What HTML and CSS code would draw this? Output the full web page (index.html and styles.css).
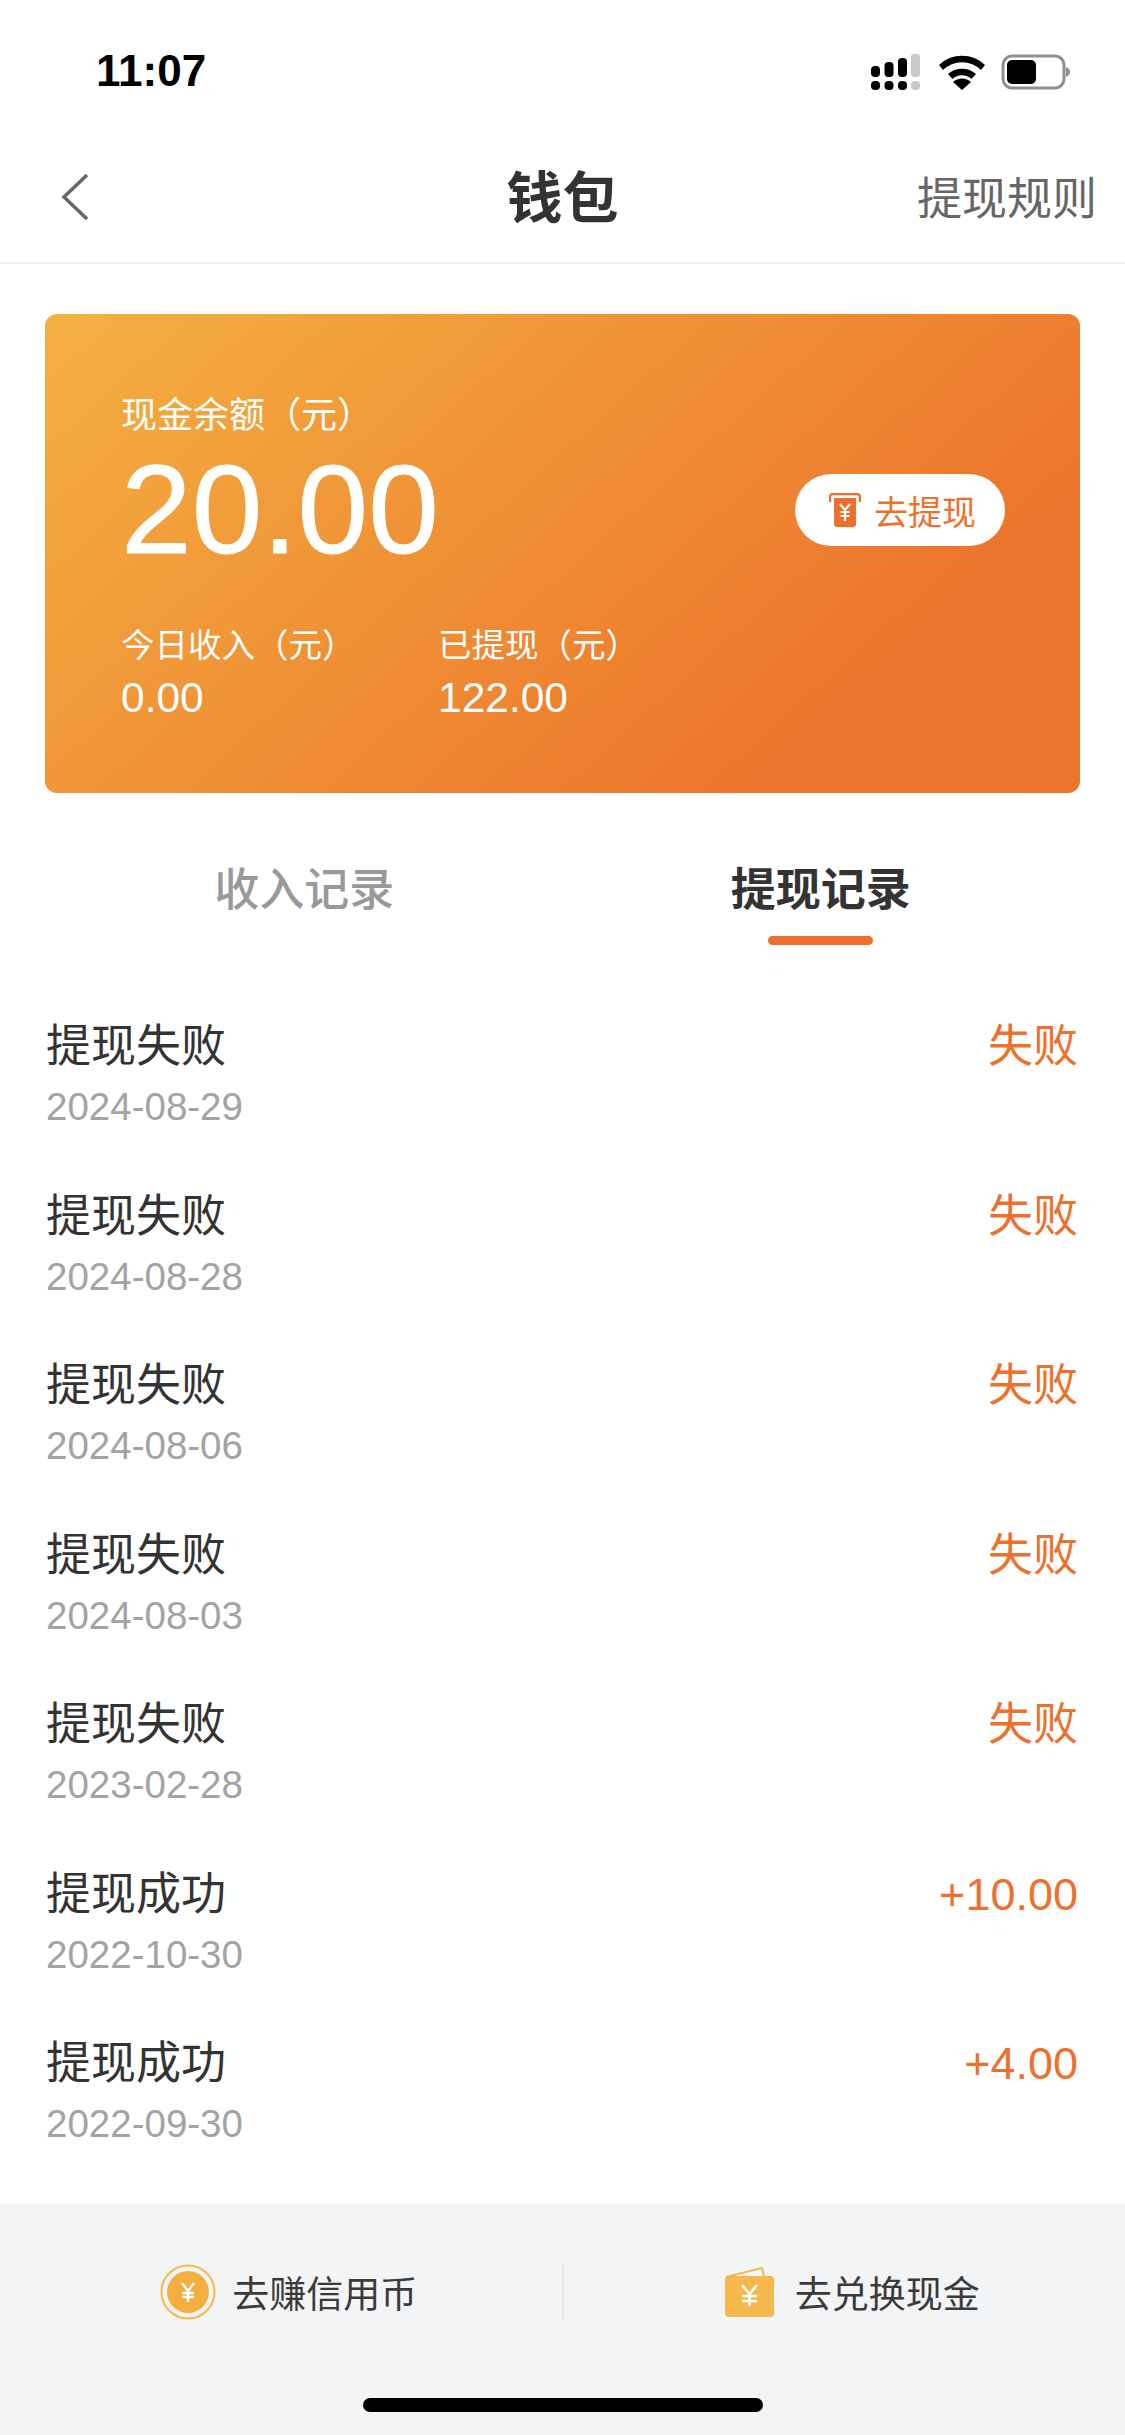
FILE: index.html
```html
<!DOCTYPE html>
<html lang="zh">
<head>
<meta charset="utf-8">
<title>钱包</title>
<link rel="stylesheet" href="styles.css">
</head>
<body>
<div class="page">
  <div class="status">
    <span class="time">11:07</span>
    <div class="status-icons">
      <svg width="52" height="36" viewBox="0 0 52 36">
        <g fill="#000">
          <rect x="0" y="12" width="9" height="11" rx="4"/><rect x="13.5" y="8" width="9" height="15" rx="4"/><rect x="27" y="4" width="9" height="19" rx="4"/>
          <rect x="0" y="27" width="9" height="9" rx="4"/><rect x="13.5" y="27" width="9" height="9" rx="4"/><rect x="27" y="27" width="9" height="9" rx="4"/>
        </g>
        <g fill="#c9c9c9"><rect x="40" y="0" width="9" height="23" rx="3"/><rect x="40" y="27" width="9" height="9" rx="4"/></g>
      </svg>
      <svg width="48" height="36" viewBox="0 0 48 36">
        <path d="M1 11a33 33 0 0 1 46 0l-4 5a27 27 0 0 0-38 0zM10 20a21 21 0 0 1 28 0l-4.500 5a14 14 0 0 0-19 0zM24 36l-9-8a13 13 0 0 1 18 0z" fill="#000"/>
      </svg>
      <svg width="69" height="36" viewBox="0 0 69 36">
        <rect x="2" y="2" width="61" height="32" rx="9" fill="none" stroke="#8f8f8f" stroke-width="3"/>
        <rect x="6" y="6" width="29" height="24" rx="5" fill="#000"/>
        <path d="M65 13c3 1 4 3 4 5s-1 4-4 5z" fill="#8f8f8f"/>
      </svg>
    </div>
  </div>
  <header class="nav">
    <svg class="back" width="30" height="48" viewBox="0 0 30 48"><path d="M27 2 4 24l23 22" fill="none" stroke="#666" stroke-width="3.500"/></svg>
    <h1 class="nav-title">钱包</h1>
    <span class="nav-rule">提现规则</span>
  </header>
  <section class="card">
    <div class="card-top">
      <div>
        <div class="label">现金余额（元）</div>
        <div class="balance">20.00</div>
      </div>
      <button class="withdraw">
        <svg width="32" height="34" viewBox="0 0 32 34">
          <path d="M1 9V4a3 3 0 0 1 3-3h24a3 3 0 0 1 3 3v5" fill="none" stroke="#ee702d" stroke-width="2.500"/>
          <path d="M5 5h22v26a3 3 0 0 1-3 3H8a3 3 0 0 1-3-3z" fill="#ee702d"/>
          <path d="M11 11l5 6 5-6M16 17v11M11.500 19h9M11.500 23h9" fill="none" stroke="#fff" stroke-width="2"/>
        </svg>
        <span>去提现</span>
      </button>
    </div>
    <div class="card-stats">
      <div class="stat"><div class="label-sm">今日收入（元）</div><div class="stat-val">0.00</div></div>
      <div class="stat"><div class="label-sm">已提现（元）</div><div class="stat-val">122.00</div></div>
    </div>
  </section>
  <nav class="tabs">
    <div class="tab">收入记录</div>
    <div class="tab tab-active">提现记录</div>
  </nav>
  <ul class="list">
    <li class="row"><div><div class="row-title">提现失败</div><div class="row-date">2024-08-29</div></div><div class="row-val">失败</div></li>
    <li class="row"><div><div class="row-title">提现失败</div><div class="row-date">2024-08-28</div></div><div class="row-val">失败</div></li>
    <li class="row"><div><div class="row-title">提现失败</div><div class="row-date">2024-08-06</div></div><div class="row-val">失败</div></li>
    <li class="row"><div><div class="row-title">提现失败</div><div class="row-date">2024-08-03</div></div><div class="row-val">失败</div></li>
    <li class="row"><div><div class="row-title">提现失败</div><div class="row-date">2023-02-28</div></div><div class="row-val">失败</div></li>
    <li class="row"><div><div class="row-title">提现成功</div><div class="row-date">2022-10-30</div></div><div class="row-val">+10.00</div></li>
    <li class="row"><div><div class="row-title">提现成功</div><div class="row-date">2022-09-30</div></div><div class="row-val">+4.00</div></li>
  </ul>
  <footer class="footer">
    <div class="actions">
      <div class="action">
        <svg width="56" height="56" viewBox="0 0 56 56">
          <circle cx="28" cy="28" r="26.500" fill="none" stroke="#f5b84c" stroke-width="2"/>
          <circle cx="28" cy="28" r="21" fill="#f3ae3f"/>
          <path d="M22 19l6 8 6-8M28 27v11M22 29h12M22 33h12" fill="none" stroke="#fff" stroke-width="2.500"/>
        </svg>
        <span>去赚信用币</span>
      </div>
      <div class="sep"></div>
      <div class="action action-wallet">
        <svg width="50" height="50" viewBox="0 0 50 50">
          <path d="M1 10 37 1l2 8" fill="none" stroke="#f5b84c" stroke-width="2"/>
          <rect x="0" y="9" width="49" height="41" rx="4" fill="#f5b84c"/>
          <path d="M17 18l7.500 9 7.500-9M24.500 27v12M17 29h15M17 34h15" fill="none" stroke="#fff" stroke-width="2.500"/>
        </svg>
        <span>去兑换现金</span>
      </div>
    </div>
    <div class="home-bar"></div>
  </footer>
</div>
</body>
</html>
```
FILE: styles.css
```css
* { box-sizing: border-box; }
html, body { margin: 0; padding: 0; background: #fff; }
body { font-family: "Liberation Sans", "Noto Sans CJK SC", sans-serif; color: #333; }
.page { width: 1125px; height: 2435px; display: flex; flex-direction: column; overflow: hidden; }

.status { height: 126px; padding: 46px 55px 0 96px; display: flex; justify-content: space-between; align-items: flex-start; }
.time { font-size: 44px; line-height: 50px; font-weight: 700; color: #000; }
.status-icons { display: flex; gap: 15px; align-items: center; margin-top: 8px; }

.nav { height: 138px; padding: 6px 28px 0 60px; border-bottom: 2px solid #ececec; display: flex; align-items: center; justify-content: space-between; position: relative; }
.nav-title { position: absolute; left: 0; right: 0; top: 33px; margin: 0; text-align: center; font-size: 56px; line-height: 80px; font-weight: 700; color: #333; }
.nav-rule { font-size: 45px; line-height: 60px; color: #666; margin-left: auto; position: relative; top: 3px; }

.card { margin: 50px 45px 0; height: 479px; border-radius: 12px; padding: 79px 75px 0 76px; color: #fff; background: linear-gradient(138deg, #f4b042 0%, #ef9135 42%, #ed752d 78%, #ed742c 100%); }
.card-top { display: flex; justify-content: space-between; align-items: center; }
.label { font-size: 36px; line-height: 46px; }
.balance { font-size: 127px; line-height: 130px; margin-top: 5px; margin-bottom: 2px; -webkit-text-stroke: 1px #fff; }
.withdraw { width: 210px; height: 72px; margin-top: 51px; border: 0; border-radius: 36px; background: #fff; color: #ee702d; font: inherit; font-size: 34px; display: flex; align-items: center; justify-content: center; gap: 13px; padding: 0 0 0 5px; }
.card-stats { display: flex; margin-top: 47px; }
.stat { width: 317px; }
.label-sm { font-size: 33.500px; line-height: 46px; }
.stat-val { font-size: 42.500px; line-height: 50px; margin-top: 4px; }

.tabs { display: flex; height: 138px; padding: 0 46px; }
.tab { flex: 1; text-align: center; font-size: 45px; line-height: 60px; padding-top: 68px; color: #999; font-weight: 500; }
.tab-active { color: #333; font-weight: 700; position: relative; }
.tab-active::after { content: ""; position: absolute; left: 50%; bottom: -14px; width: 105px; height: 9px; margin-left: -53px; border-radius: 5px; background: #ee702d; }

.list { list-style: none; margin: 0; padding: 70px 47px 0 46px; flex: 1; }
.row { height: 169.500px; padding-top: 16px; display: flex; justify-content: space-between; align-items: flex-start; }
.row-title { font-size: 45px; line-height: 60px; color: #333; }
.row-date { font-size: 38.500px; line-height: 44px; margin-top: 8px; color: #a3a3a3; }
.row-val { font-size: 45px; line-height: 60px; color: #ee702d; }

.footer { height: 231px; background: #f3f4f6; display: flex; flex-direction: column; align-items: center; }
.actions { width: 100%; display: flex; align-items: center; height: 194px; padding: 0 0 18px; }
.action { flex: 1; display: flex; align-items: center; justify-content: center; gap: 16px; padding-left: 16px; font-size: 37px; color: #3a3a3a; }
.action-wallet { gap: 20px; }
.sep { width: 2px; height: 58px; background: #e4e5e8; }
.home-bar { width: 400px; height: 14px; border-radius: 7px; background: #000; }
```
